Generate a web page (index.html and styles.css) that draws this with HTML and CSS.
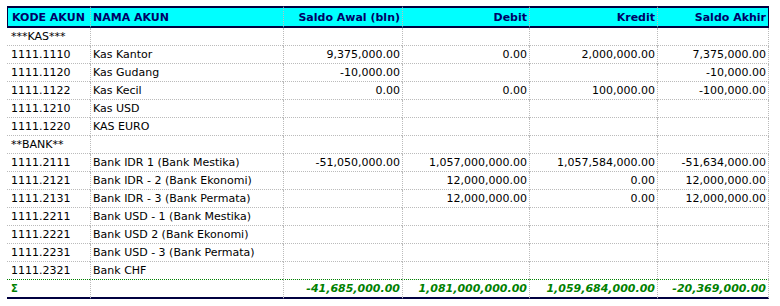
FILE: index.html
```html
<!DOCTYPE html>
<html lang="id">
<head>
    <meta charset="UTF-8" />
    <title>Neraca Saldo</title>
    <link rel="stylesheet" href="styles.css">
</head>
<body>
    <table class="grid">
        <colgroup>
            <col class="c-kode">
            <col class="c-nama">
            <col class="c-awal">
            <col class="c-debit">
            <col class="c-kredit">
            <col class="c-akhir">
        </colgroup>
        <thead>
            <tr>
                <th>KODE AKUN</th>
                <th>NAMA AKUN</th>
                <th class="num">Saldo Awal (bln)</th>
                <th class="num">Debit</th>
                <th class="num">Kredit</th>
                <th class="num">Saldo Akhir</th>
            </tr>
        </thead>
        <tbody>
            <tr><td>***KAS***</td><td></td><td></td><td></td><td></td><td></td></tr>
            <tr><td>1111.1110</td><td>Kas Kantor</td><td class="num">9,375,000.00</td><td class="num">0.00</td><td class="num">2,000,000.00</td><td class="num">7,375,000.00</td></tr>
            <tr><td>1111.1120</td><td>Kas Gudang</td><td class="num">-10,000.00</td><td></td><td></td><td class="num">-10,000.00</td></tr>
            <tr><td>1111.1122</td><td>Kas Kecil</td><td class="num">0.00</td><td class="num">0.00</td><td class="num">100,000.00</td><td class="num">-100,000.00</td></tr>
            <tr><td>1111.1210</td><td>Kas USD</td><td></td><td></td><td></td><td></td></tr>
            <tr><td>1111.1220</td><td>KAS EURO</td><td></td><td></td><td></td><td></td></tr>
            <tr><td>**BANK**</td><td></td><td></td><td></td><td></td><td></td></tr>
            <tr><td>1111.2111</td><td>Bank IDR 1 (Bank Mestika)</td><td class="num">-51,050,000.00</td><td class="num">1,057,000,000.00</td><td class="num">1,057,584,000.00</td><td class="num">-51,634,000.00</td></tr>
            <tr><td>1111.2121</td><td>Bank IDR - 2 (Bank Ekonomi)</td><td></td><td class="num">12,000,000.00</td><td class="num">0.00</td><td class="num">12,000,000.00</td></tr>
            <tr><td>1111.2131</td><td>Bank IDR - 3 (Bank Permata)</td><td></td><td class="num">12,000,000.00</td><td class="num">0.00</td><td class="num">12,000,000.00</td></tr>
            <tr><td>1111.2211</td><td>Bank USD - 1 (Bank Mestika)</td><td></td><td></td><td></td><td></td></tr>
            <tr><td>1111.2221</td><td>Bank USD 2 (Bank Ekonomi)</td><td></td><td></td><td></td><td></td></tr>
            <tr><td>1111.2231</td><td>Bank USD - 3 (Bank Permata)</td><td></td><td></td><td></td><td></td></tr>
            <tr class="last"><td>1111.2321</td><td>Bank CHF</td><td></td><td></td><td></td><td></td></tr>
        </tbody>
        <tfoot>
            <tr>
                <td class="sigma">&Sigma;</td>
                <td></td>
                <td class="num">-41,685,000.00</td>
                <td class="num">1,081,000,000.00</td>
                <td class="num">1,059,684,000.00</td>
                <td class="num">-20,369,000.00</td>
            </tr>
        </tfoot>
    </table>
</body>
</html>
```

FILE: styles.css
```css
body {
    margin: 6px 7px;
    font-family: "DejaVu Sans", Verdana, sans-serif;
    font-size: 11px;
    color: #000;
    background: #fff;
}

.grid {
    width: 762px;
    table-layout: fixed;
    border-collapse: separate;
    border-spacing: 0;
}

.c-kode { width: 83px; }
.c-nama { width: 193px; }
.c-awal { width: 119px; }
.c-debit { width: 127px; }
.c-kredit { width: 128px; }
.c-akhir { width: 112px; }

th, td {
    padding: 0 2px 0 4px;
    white-space: nowrap;
    overflow: hidden;
    text-align: left;
}

th + th, td + td {
    padding-left: 2px;
    border-left: 1px dotted #bbb;
}

th:last-child, td:last-child {
    border-right: 1px dotted #bbb;
}

th {
    height: 18px;
    background: #00ffff;
    color: #000066;
    font-weight: bold;
    border-top: 2px solid #000040;
    border-bottom: 2px solid #000040;
}

th:first-child {
    border-left: 1px solid #000040;
}

th:last-child {
    border-right: 1px solid #000040;
}

td {
    height: 17px;
    border-bottom: 1px dotted #bbb;
}

.num {
    text-align: right;
}

tbody tr.last td {
    border-bottom: none;
}

tfoot td {
    height: 17px;
    color: #008000;
    font-weight: bold;
    font-style: italic;
    border-top: 1px dotted #008000;
    border-bottom: 2px solid #000040;
}

tfoot td.sigma {
    font-style: normal;
    font-size: 10px;
}
```
